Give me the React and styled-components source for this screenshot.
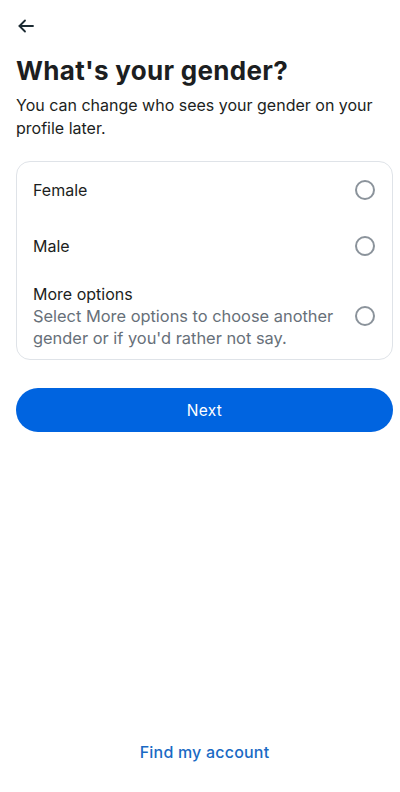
import React from "react";
import styled, { createGlobalStyle } from "styled-components";

const Global = createGlobalStyle`
  html, body { margin: 0; padding: 0; background: #fff; }
  body { font-family: "Inter", "Roboto", sans-serif; color: #1c2b33; }
  * { box-sizing: border-box; }
`;

const Page = styled.div`
  width: 400px;
  height: 792px;
  display: flex;
  flex-direction: column;
  padding: 0 7px 0 16px;
`;

const TopBar = styled.div`
  height: 53px;
  display: flex;
  align-items: center;
  padding-bottom: 1px;
`;

const BackButton = styled.button`
  border: none;
  background: none;
  padding: 0;
  margin-left: 1px;
  display: flex;
  color: #1c2b33;
`;

const Title = styled.h1`
  margin: 2px 0 0;
  font-size: 26px;
  font-weight: 700;
  letter-spacing: 0.3px;
  line-height: 32px;
  color: #1c1e21;
`;

const Subtitle = styled.p`
  margin: 7px 0 0;
  font-size: 16px;
  line-height: 23px;
  color: #1c1e21;
`;

const Card = styled.div`
  margin-top: 21px;
  border: 1px solid #dfe3e8;
  border-radius: 14px;
  display: flex;
  flex-direction: column;
`;

const Row = styled.label`
  display: flex;
  align-items: center;
  justify-content: space-between;
  padding: ${(p) => (p.$tall ? "9px 16px 10px" : "0 16px")};
  min-height: 56px;
`;

const Texts = styled.div`
  display: flex;
  flex-direction: column;
`;

const Label = styled.span`
  font-size: 16px;
  line-height: 22px;
  color: #1c1e21;
`;

const Hint = styled.span`
  font-size: 16.4px;
  line-height: 22px;
  color: #677079;
`;

const Radio = styled.span`
  width: 20px;
  height: 20px;
  border-radius: 50%;
  border: 2px solid #8b939b;
  flex-shrink: 0;
  margin-left: 12px;
  margin-right: 1px;
`;

const NextButton = styled.button`
  margin-top: 28px;
  height: 44px;
  width: 100%;
  border: none;
  border-radius: 22px;
  background: #0064e0;
  color: #fff;
  font-family: inherit;
  font-size: 15.5px;
  font-weight: 400;
  letter-spacing: 0.3px;
`;

const Spacer = styled.div`
  flex: 1;
`;

const FindLink = styled.a`
  align-self: center;
  margin-bottom: 30px;
  font-size: 16px;
  font-weight: 500;
  letter-spacing: 0.2px;
  color: #1a6ac4;
  text-decoration: none;
`;

export default function App() {
  return (
    <>
      <Global />
      <Page>
        <TopBar>
          <BackButton aria-label="Back">
            <svg width="18" height="18" viewBox="0 0 18 18" fill="none" stroke="currentColor" strokeWidth="1.8" strokeLinecap="round" strokeLinejoin="round">
              <path d="M16 9H2.5" />
              <path d="M8 3.5L2.5 9L8 14.5" />
            </svg>
          </BackButton>
        </TopBar>
        <Title>What's your gender?</Title>
        <Subtitle>You can change who sees your gender on your profile later.</Subtitle>
        <Card>
          <Row>
            <Label>Female</Label>
            <Radio />
          </Row>
          <Row>
            <Label>Male</Label>
            <Radio />
          </Row>
          <Row $tall>
            <Texts>
              <Label>More options</Label>
              <Hint>Select More options to choose another gender or if you'd rather not say.</Hint>
            </Texts>
            <Radio />
          </Row>
        </Card>
        <NextButton>Next</NextButton>
        <Spacer />
        <FindLink href="#">Find my account</FindLink>
      </Page>
    </>
  );
}
